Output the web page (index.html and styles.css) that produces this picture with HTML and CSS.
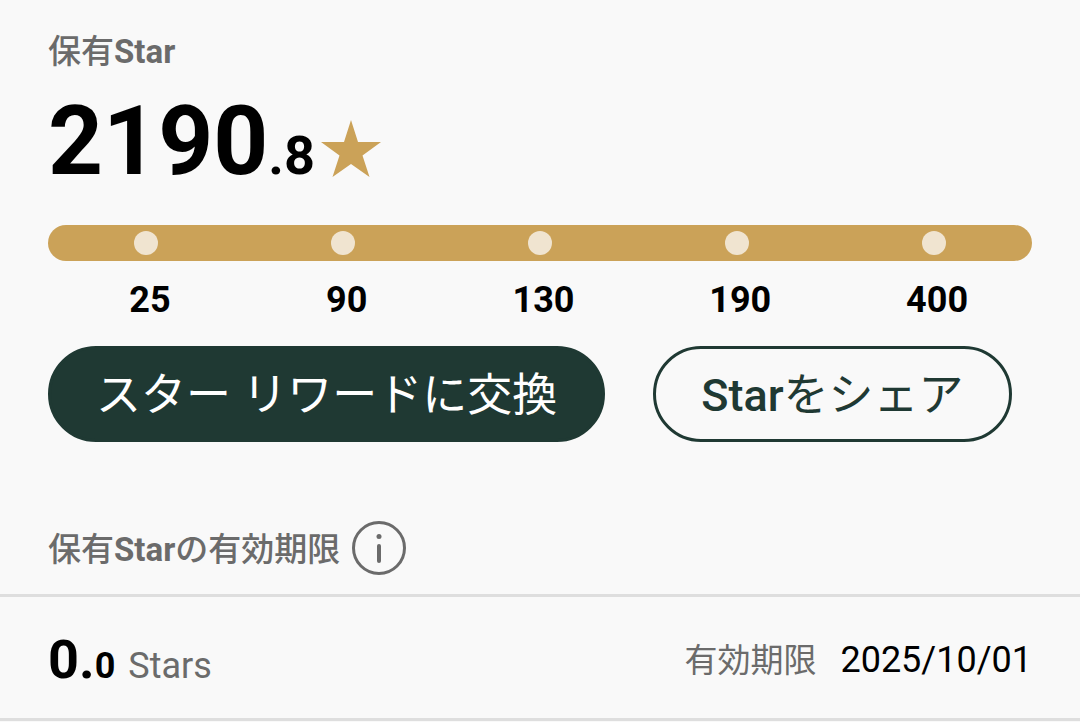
FILE: index.html
```html
<!DOCTYPE html>
<html lang="ja">
<head>
<meta charset="utf-8">
<meta name="viewport" content="width=device-width, initial-scale=1">
<title>保有Star</title>
<link rel="stylesheet" href="styles.css">
</head>
<body>
<main>
  <section class="balance">
    <h1 class="label">保有<span class="latin">Star</span></h1>
    <p class="total"><span class="whole">2190</span><span class="decimal">.8</span><svg class="star" viewBox="0 0 60 58" aria-hidden="true"><path d="M30 0 37 22H60L41.500 35.500 48.500 57 30 44 11.500 57 18.500 35.500 0 22H23Z"/></svg></p>
    <ol class="track">
      <li><span class="dot"></span><span class="goal">25</span></li>
      <li><span class="dot"></span><span class="goal">90</span></li>
      <li><span class="dot"></span><span class="goal">130</span></li>
      <li><span class="dot"></span><span class="goal">190</span></li>
      <li><span class="dot"></span><span class="goal">400</span></li>
    </ol>
    <div class="actions">
      <button type="button" class="button primary">スター リワードに交換</button>
      <button type="button" class="button outline"><span class="latin">Star</span>をシェア</button>
    </div>
  </section>
  <section class="expiry">
    <div class="expiry-head">
      <h2 class="label">保有<span class="latin">Star</span>の有効期限</h2>
      <button type="button" class="info" aria-label="有効期限について"><svg viewBox="0 0 54 54" aria-hidden="true"><circle class="ring" cx="27" cy="27" r="25.500"/><path class="stem" d="M27 25V40"/><circle class="point" cx="27" cy="15.500" r="2.500"/></svg></button>
    </div>
    <div class="row">
      <p class="amount"><span class="amount-whole">0.</span><span class="amount-decimal">0</span><span class="unit">Stars</span></p>
      <p class="until"><span class="until-label">有効期限</span><time datetime="2025-10-01">2025/10/01</time></p>
    </div>
  </section>
</main>
</body>
</html>
```
FILE: styles.css
```css
* { box-sizing: border-box; }
body {
  margin: 0;
  background: #f9f9f9;
  color: #000;
  font-family: Roboto, "Noto Sans CJK JP", sans-serif;
}
h1, h2, p, ol { margin: 0; padding: 0; }
button { font-family: inherit; cursor: pointer; }
.balance { padding: 32px 48px 0; }
.label {
  color: #6b6b6b;
  font-size: 33px;
  font-weight: 500;
  line-height: 40px;
}
.label .latin { font-weight: 700; }
.total {
  display: flex;
  align-items: baseline;
  margin-top: 17px;
  font-weight: 700;
  line-height: 104px;
}
.whole { font-size: 96px; }
.decimal { font-size: 54px; }
.star {
  align-self: flex-end;
  width: 60px;
  height: 58px;
  margin: 0 0 30px 6px;
  fill: #cba258;
}
.track {
  display: flex;
  height: 36px;
  margin-top: 17px;
  border-radius: 18px;
  background: #cba258;
  list-style: none;
}
.track li {
  display: flex;
  flex: 1;
  flex-direction: column;
  align-items: center;
  padding-top: 6px;
}
.dot {
  flex: none;
  width: 24px;
  height: 24px;
  border-radius: 50%;
  background: #f0e4d0;
}
.goal {
  padding: 24px 0 0 7px;
  font-size: 36px;
  font-weight: 700;
  line-height: 42px;
}
.actions { display: flex; gap: 48px; margin-top: 85px; }
.button {
  height: 96px;
  padding: 4px 45px 0;
  border: 3px solid #1f3933;
  border-radius: 48px;
  font-size: 45px;
  font-weight: 400;
  line-height: 60px;
  white-space: nowrap;
}
.button .latin { font-weight: 500; }
.primary { background: #1f3933; color: #fff; }
.outline { background: transparent; color: #1f3933; }
.expiry { margin-top: 79px; }
.expiry-head {
  display: flex;
  align-items: center;
  gap: 12px;
  padding: 0 48px 19px;
}
.expiry-head .label { padding-top: 4px; }
.info { width: 54px; height: 54px; padding: 0; border: 0; background: none; }
.info svg { display: block; }
.ring { fill: none; stroke: #6b6b6b; stroke-width: 3; }
.stem { stroke: #6b6b6b; stroke-width: 4; stroke-linecap: round; }
.point { fill: #6b6b6b; }
.row {
  display: flex;
  align-items: center;
  justify-content: space-between;
  padding: 25px 48px 20px;
  border: solid #dedede;
  border-width: 3px 0;
}
.amount {
  display: flex;
  align-items: baseline;
  padding-top: 6px;
  font-weight: 700;
  line-height: 64px;
}
.amount-whole { font-size: 54px; }
.amount-decimal { font-size: 36px; }
.unit { margin-left: 13px; color: #6b6b6b; font-size: 36px; font-weight: 400; }
.until { display: flex; align-items: baseline; gap: 24px; font-size: 36px; line-height: 48px; }
.until-label { color: #6b6b6b; font-size: 33px; }
```
